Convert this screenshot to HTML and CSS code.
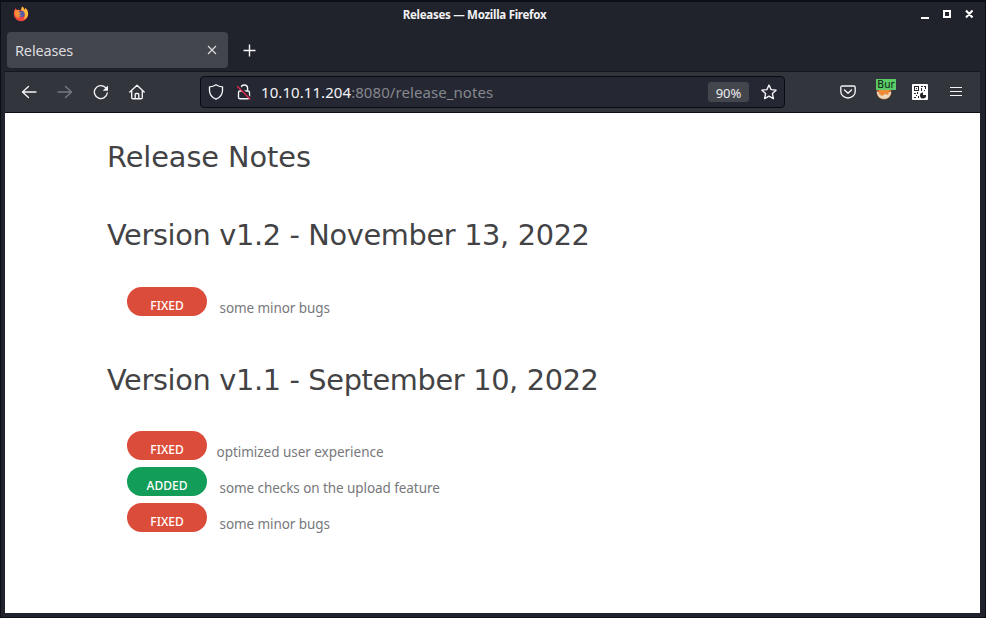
FILE: index.html
```html
<!DOCTYPE html>
<html lang="en">
<head>
<meta charset="utf-8">
<title>Releases</title>
<link rel="stylesheet" href="styles.css">
</head>
<body>
<div class="window">
  <header class="titlebar">
    <svg class="firefox" width="16" height="16" viewBox="0 0 16 16"><path d="M2.4 2.3 4 4l1.400-.6L7 4.600 8.600 3 9 .5c1.300.8 2 1.800 2.400 2.900L12.500 2c2 2 3 4 2.700 7A7.200 7.200 0 0 1 .9 9C.7 6.500 1.200 4 2.400 2.300z" fill="#f3463f"/><path d="M9 .5c2 1.100 2 2.400 2.700 3.500L12.600 2c2 2 2.800 4.200 2.400 6.500-.4 2.500-2 4.300-4.500 5C13 10 12 5 8 4z" fill="#ffba3b"/><path d="M1.500 6C2 4 4 3.500 7 4.600L5 7l3 2.500L6 12C3 12 1.500 9 1.500 6z" fill="#ff8a36"/><circle cx="8.300" cy="8" r="3.300" fill="#565ca8"/><path d="M4 6.600c1.700-.7 3 .1 4.200.2-.4 1-2 .8-2 1.700 0 1 1.400 1.300 2.600.8-1 2-4.600 1.500-4.800-2.700z" fill="#ff9b36"/></svg>
    <span class="window-title">Releases — Mozilla Firefox</span>
    <svg class="controls" width="54" height="12" viewBox="0 0 54 12" fill="none" stroke="#fff" stroke-width="2"><path d="M1 10h8M24 3h6v6h-6zM46 2.500l6.500 7M52.500 2.500 46 9.500"/></svg>
  </header>
  <div class="tabs">
    <div class="tab"><span>Releases</span><svg width="10" height="10" viewBox="0 0 10 10" fill="none" stroke="#dedee3" stroke-width="1.1"><path d="m1 1 8 8M9 1 1 9"/></svg></div>
    <svg class="new-tab" width="13" height="13" viewBox="0 0 13 13" stroke="#f5f5f8" stroke-width="1.4"><path d="M6.500 .5v12M.5 6.500h12"/></svg>
  </div>
  <nav class="toolbar">
    <div class="nav-icons">
      <svg viewBox="0 0 16 16"><path d="M15 8H1.500M7.500 2.500 1.500 8l6 5.500"/></svg>
      <svg class="dim" viewBox="0 0 16 16"><path d="M1 8h13.500M8.500 2.500l6 5.500-6 5.500"/></svg>
      <svg viewBox="0 0 16 16"><path d="M14.300 9A6.500 6.500 0 1 1 12.500 3.500l1.500 1.800"/><path class="solid" d="M15 1.500v5.300h-5.300z"/></svg>
      <svg viewBox="0 0 16 16"><path d="M.8 8 8 1.200 15.200 8M2.700 6.500v7q0 1.200 1.200 1.200h8.200q1.200 0 1.200-1.200v-7M6.200 14.500v-4q0-1 1-1h1.600q1 0 1 1v4"/></svg>
    </div>
    <div class="address">
      <svg viewBox="0 0 16 16"><path d="M8 .8c2 1.500 4.200 2 6.500 2.100v3.500c0 4-2.500 7-6.500 8.800-4-1.800-6.500-4.800-6.500-8.800V2.900C3.800 2.800 6 2.300 8 .8z"/></svg>
      <svg class="lock" viewBox="0 0 16 16"><path d="M5 7V4.300a3.300 3.300 0 0 1 6.600 0V7M4 7h8q1.500 0 1.500 1.500v4.700q0 1.500-1.500 1.500H4q-1.500 0-1.500-1.500V8.500Q2.500 7 4 7z"/><path class="gap" d="m2.500 1.500 12 13"/><path class="slash" d="m1.500 2.500 12.500 12.500"/></svg>
      <span class="url"><b>10.10.11.204</b>:8080/release_notes</span>
      <span class="zoom">90%</span>
      <svg class="star" viewBox="0 0 16 16"><path d="m8 1 2.100 4.600 5 .6-3.700 3.400 1 5L8 12.100l-4.400 2.500 1-5L.9 6.200l5-.6z"/></svg>
    </div>
    <div class="extensions">
      <svg viewBox="0 0 16 16"><path d="M2.300 2h11.400q1.500 0 1.500 1.500v4a7.200 6.500 0 0 1-14.400 0v-4Q.8 2 2.300 2zM4.500 6 8 9.300 11.500 6"/></svg>
      <div class="burp"><svg viewBox="0 0 16 16"><circle class="ball" cx="8" cy="8" r="7.500"/><path class="cream" d="M1 8h14c0 4-3 7-7 7s-7-3-7-7z"/><path class="orange" d="M3 5h11l-2 6-3-1-3 2-3-2z"/></svg><span>Bur</span></div>
      <svg class="qr" viewBox="0 0 16 16"><rect class="paper" width="16" height="16" rx="1"/><path class="ink" d="M2 2h5v5H2zM9 2h2v1H9zM12 2h2v3h-1V3h-1zM9 4h1v3H9zM12 6h1v1h-1zM2 9h2v1H2zM5 8h1v2H5zM4 11h1v1H4zM2 13h2v1H2zM6 12h1v2H6z"/><path class="paper" d="M3 3h3v3H3z"/><path class="ink" d="M4 4h1v1H4zM11 8.500V11h3a3 3 0 1 1-3-2.500z"/></svg>
      <svg class="menu" viewBox="0 0 16 16"><path d="M2 3.500h12M2 7.500h12M2 11.500h12"/></svg>
    </div>
  </nav>
  <main>
    <h1>Release Notes</h1>
    <section class="latest">
      <h2>Version v1.2 - November 13, 2022</h2>
      <ul><li><span class="badge">FIXED</span><span class="note">some minor bugs</span></li></ul>
    </section>
    <section>
      <h2>Version v1.1 - September 10, 2022</h2>
      <ul>
        <li><span class="badge">FIXED</span><span class="note tight">optimized user experience</span></li>
        <li><span class="badge added">ADDED</span><span class="note">some checks on the upload feature</span></li>
        <li><span class="badge">FIXED</span><span class="note">some minor bugs</span></li>
      </ul>
    </section>
  </main>
</div>
</body>
</html>
```
FILE: styles.css
```css
* { box-sizing: border-box; }
body { margin: 0; background: #11131b; font-family: "Noto Sans", sans-serif; }
svg { flex: none; display: block; }
.window { width: 986px; height: 618px; background: #20232b; border: 1px solid #0d0f17; border-top-width: 2px; padding: 0 5px 4px 4px; display: flex; flex-direction: column; overflow: hidden; }
.titlebar { height: 28px; display: flex; align-items: center; justify-content: space-between; padding: 0 6px 4px 8px; }
.window-title { color: #f2f2f4; font-size: 11.5px; font-weight: 700; white-space: nowrap; letter-spacing: -.28px; }
.tabs { height: 41px; display: flex; align-items: center; padding: 0 2px 1px; }
.tab { width: 221px; height: 36px; border-radius: 4px; background: #43454c; display: flex; align-items: center; justify-content: space-between; padding: 0 11px 0 8px; color: #dddde0; font-size: 14.5px; letter-spacing: -.15px; }
.new-tab { margin-left: 15px; }
.toolbar { height: 42px; flex: none; background: #32353c; border-top: 1px solid #14161e; border-bottom: 1px solid #0d0f17; display: flex; align-items: center; }
.toolbar svg { width: 16px; height: 16px; fill: none; stroke: #f5f5f8; stroke-width: 1.35; stroke-linecap: round; stroke-linejoin: round; }
.nav-icons { display: flex; gap: 20px; padding-left: 16px; width: 195px; }
.toolbar .dim { stroke: #777980; }
.toolbar .solid { fill: #f5f5f8; stroke: none; }
.address { width: 585px; height: 32px; border: 1px solid #090b13; border-radius: 4px; background: #252832; display: flex; align-items: center; padding: 0 7px; }
.address .lock { margin-left: 12px; }
.lock .gap { stroke: #252832; stroke-width: 2; }
.lock .slash { stroke: #e52852; }
.url { margin-left: 9px; color: #85878e; font-size: 15px; white-space: nowrap; letter-spacing: .07px; }
.url b { color: #f4f4f7; font-weight: 400; }
.zoom { margin-left: auto; width: 41px; height: 20px; border-radius: 3px; background: #44464e; color: #eee; font-size: 13px; line-height: 22px; text-align: center; }
.toolbar .star { margin-left: 12px; }
.extensions { display: flex; gap: 20px; margin-left: 55px; }
.burp { width: 16px; height: 16px; position: relative; }
.burp span { position: absolute; left: 0; top: -5px; width: 20px; height: 11px; overflow: hidden; background: #5bcb68; color: #082413; font: 10px/11px "DejaVu Sans", sans-serif; text-align: center; }
.toolbar .ball { fill: #c66c3c; stroke: none; }
.toolbar .cream { fill: #ead8bd; stroke: none; }
.toolbar .orange { fill: #f18a36; stroke: none; }
.toolbar .paper { fill: #fff; stroke: none; }
.toolbar .ink { fill: #22242a; stroke: none; }
.toolbar .menu { stroke-linecap: butt; shape-rendering: crispEdges; }
main { flex: 1; background: #fff; color: #434345; padding: 25px 0 0 102px; }
h1, h2 { font-family: "DejaVu Sans", sans-serif; font-weight: 400; font-size: 28.8px; line-height: 38px; margin: 0; white-space: nowrap; }
h1 { letter-spacing: -.08px; }
h2 { letter-spacing: -.35px; }
.latest { margin-top: 40px; }
ul { list-style: none; margin: 32px 0 0; padding: 0 0 0 20px; display: grid; gap: 7px; }
.latest ul { margin-top: 33px; }
section + section { margin-top: 45px; }
li { display: flex; height: 29px; }
.badge { width: 80px; height: 29px; border-radius: 15px; background: #dc4c3a; color: #fff; font-size: 12px; font-weight: 500; line-height: 37px; text-align: center; }
.added { background: #129d58; }
.note { margin-left: 12.5px; color: #77787b; font-size: 13.5px; line-height: 42px; white-space: nowrap; letter-spacing: -.07px; }
.tight { margin-left: 9.5px; letter-spacing: -.03px; }
```
